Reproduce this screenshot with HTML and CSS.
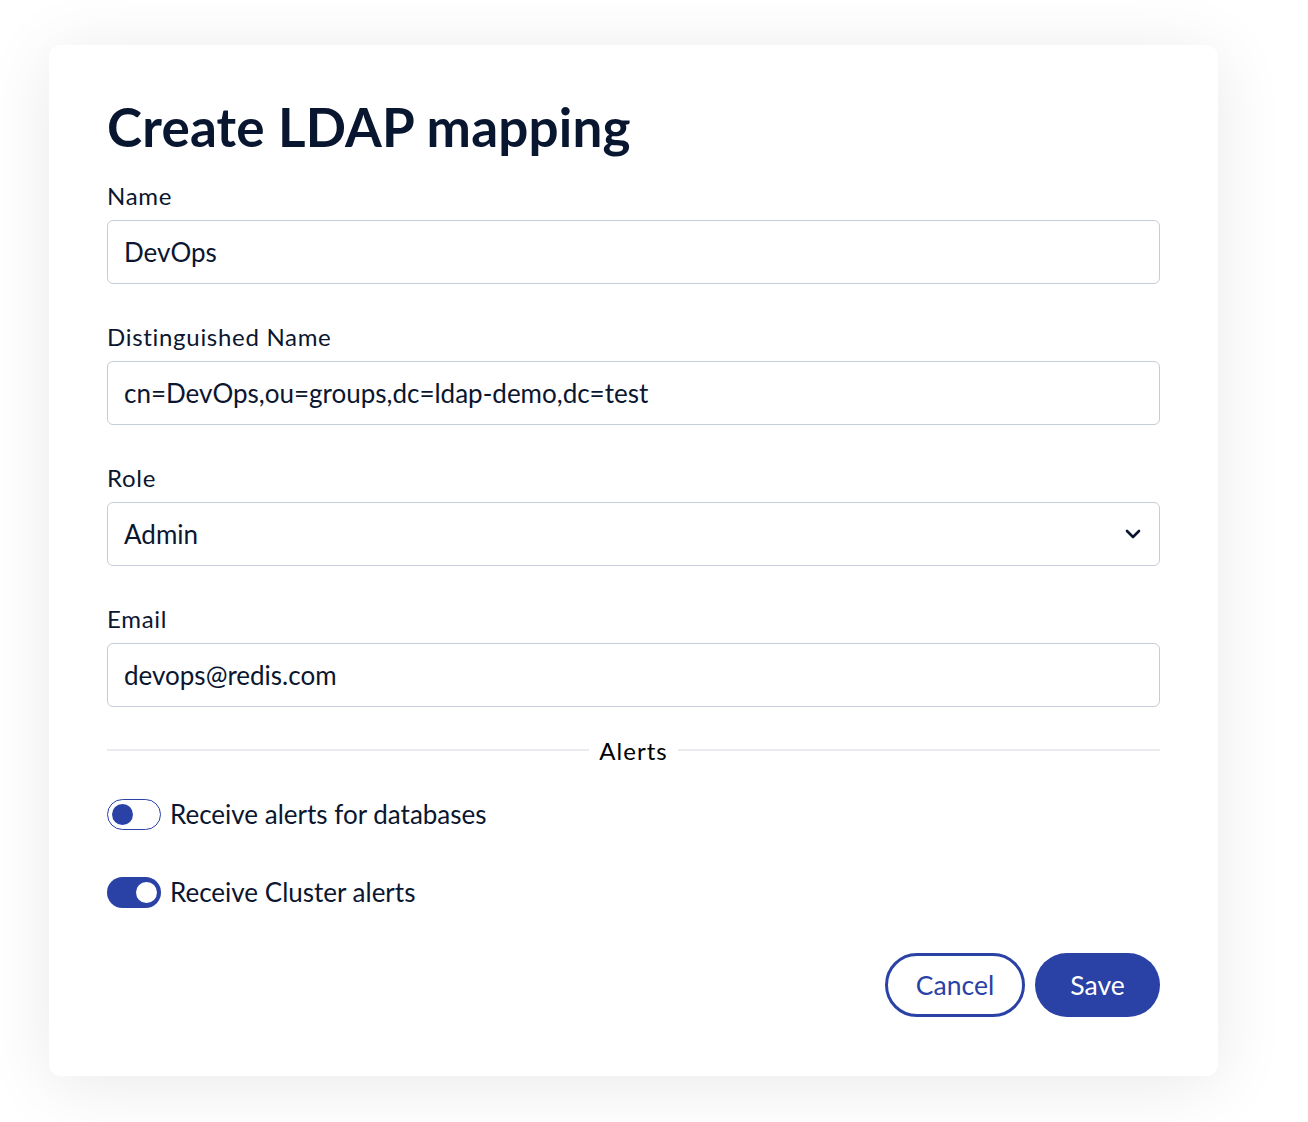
FILE: index.html
```html
<!DOCTYPE html>
<html lang="en">
<head>
<meta charset="utf-8">
<title>Create LDAP mapping</title>
<link rel="stylesheet" href="styles.css">
</head>
<body>
<div class="card">
  <h1 class="title">Create LDAP mapping</h1>
  <div class="field">
    <label class="label">Name</label>
    <div class="input">DevOps</div>
  </div>
  <div class="field">
    <label class="label">Distinguished Name</label>
    <div class="input">cn=DevOps,ou=groups,dc=ldap-demo,dc=test</div>
  </div>
  <div class="field">
    <label class="label">Role</label>
    <div class="input select">
      <span>Admin</span>
      <svg class="chevron" width="16" height="10" viewBox="0 0 16 10"><path d="M2 2 L8 8 L14 2" fill="none" stroke="#0b1630" stroke-width="2.6" stroke-linecap="round" stroke-linejoin="round"/></svg>
    </div>
  </div>
  <div class="field">
    <label class="label">Email</label>
    <div class="input">devops@redis.com</div>
  </div>
  <div class="divider"><span class="line"></span><span class="divider-text">Alerts</span><span class="line"></span></div>
  <div class="toggle-row">
    <span class="toggle off"><span class="knob"></span></span>
    <span class="toggle-label">Receive alerts for databases</span>
  </div>
  <div class="toggle-row">
    <span class="toggle on"><span class="knob"></span></span>
    <span class="toggle-label">Receive Cluster alerts</span>
  </div>
  <div class="actions">
    <button class="btn btn-outline">Cancel</button>
    <button class="btn btn-primary">Save</button>
  </div>
</div>
</body>
</html>
```
FILE: styles.css
```css
html, body {
  margin: 0;
  padding: 0;
  background: #ffffff;
}
body {
  font-family: Lato, "Noto Sans", sans-serif;
  color: #0b1630;
  width: 1308px;
  height: 1122px;
  overflow: hidden;
}
.card {
  margin: 45px 0 0 49px;
  width: 1169px;
  height: 1031px;
  box-sizing: border-box;
  padding: 52px 58px 0 58px;
  background: #ffffff;
  border-radius: 12px;
  box-shadow: 0 8px 70px rgba(0, 0, 0, 0.09);
  display: flex;
  flex-direction: column;
}
.title {
  margin: 0;
  font-size: 53px;
  line-height: 60px;
  font-weight: 700;
  color: #091630;
  letter-spacing: 0.2px;
}
.field {
  display: flex;
  flex-direction: column;
}
.field + .field {
  margin-top: 39px;
}
.title + .field {
  margin-top: 25px;
}
.label {
  font-size: 24px;
  line-height: 28px;
  letter-spacing: 0.7px;
  margin-bottom: 10px;
}
.input {
  height: 64px;
  box-sizing: border-box;
  border: 1px solid #c6ccd8;
  border-radius: 6px;
  padding: 0 16px;
  display: flex;
  align-items: center;
  font-size: 26px;
  color: #0b1630;
}
.select {
  justify-content: space-between;
  padding-right: 18px;
}
.divider {
  margin-top: 28px;
  display: flex;
  align-items: center;
  gap: 10px;
  height: 30px;
}
.line {
  flex: 1;
  height: 2px;
  background: #ebebef;
}
.divider-text {
  font-size: 24px;
  letter-spacing: 1px;
  color: #000000;
}
.toggle-row {
  display: flex;
  align-items: center;
  gap: 9px;
  height: 32px;
}
.divider + .toggle-row {
  margin-top: 33px;
}
.toggle-row + .toggle-row {
  margin-top: 46px;
}
.toggle {
  width: 54px;
  height: 31px;
  box-sizing: border-box;
  border-radius: 16px;
  display: flex;
  align-items: center;
  padding: 0 4px;
}
.toggle.off {
  border: 1.5px solid #2a41a6;
  background: #ffffff;
  justify-content: flex-start;
}
.toggle.on {
  background: #2a41a6;
  justify-content: flex-end;
}
.knob {
  width: 21px;
  height: 21px;
  border-radius: 50%;
}
.toggle.off .knob {
  background: #2a41a6;
}
.toggle.on .knob {
  background: #ffffff;
}
.toggle-label {
  font-size: 26px;
  color: #0b1630;
}
.actions {
  margin-top: 45px;
  display: flex;
  justify-content: flex-end;
  gap: 10px;
}
.btn {
  height: 64px;
  border-radius: 32px;
  font-family: Lato, "Noto Sans", sans-serif;
  font-size: 26.5px;
  box-sizing: border-box;
  cursor: pointer;
}
.btn-outline {
  width: 140px;
  background: #ffffff;
  border: 3px solid #2a41a6;
  color: #2a41a6;
}
.btn-primary {
  width: 125px;
  background: #2a41a6;
  border: none;
  color: #ffffff;
}
```
